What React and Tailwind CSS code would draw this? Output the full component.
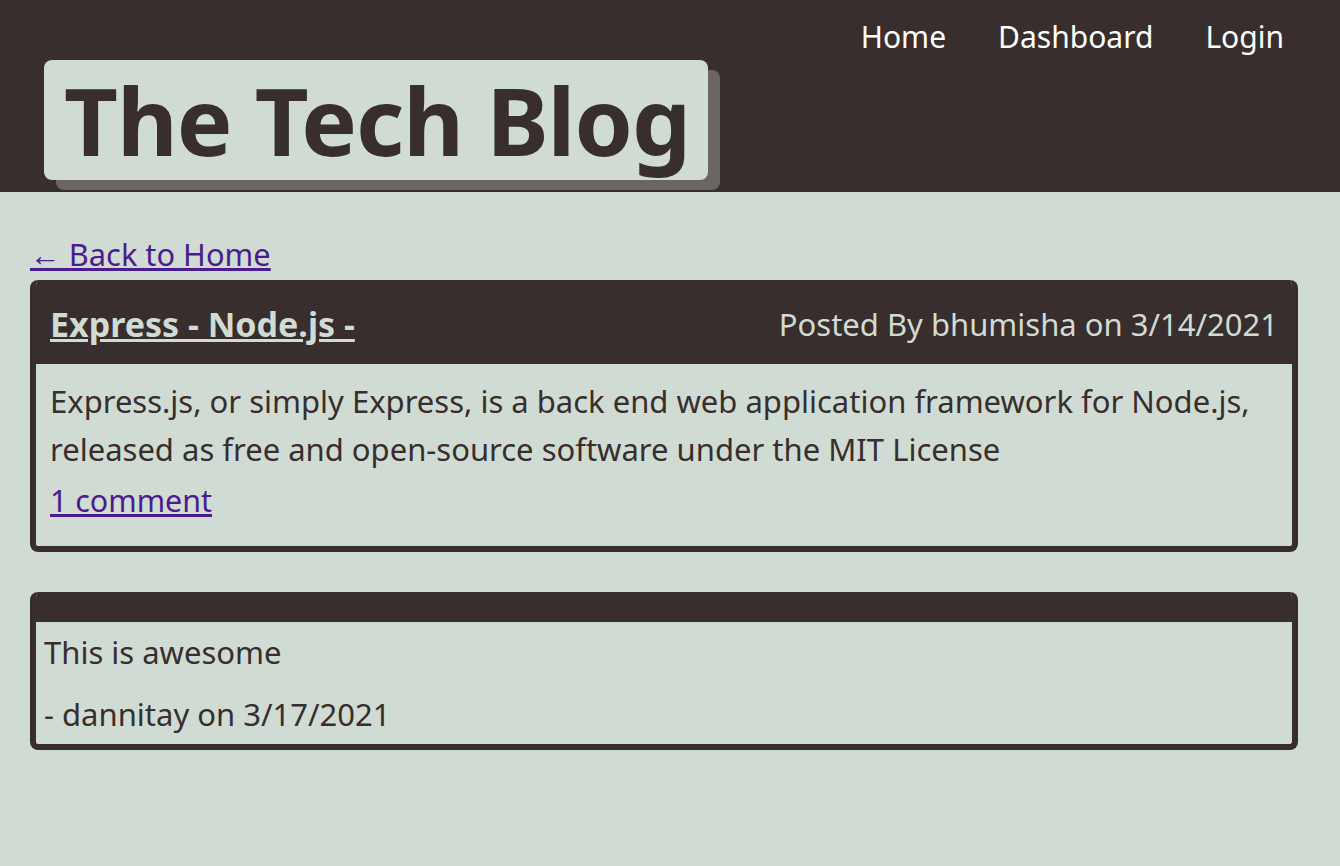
const posts = {
  title: 'Express - Node.js -',
  author: 'bhumisha',
  date: '3/14/2021',
  body: 'Express.js, or simply Express, is a back end web application framework for Node.js, released as free and open-source software under the MIT License',
};

const comments = [{ text: 'This is awesome', user: 'dannitay', date: '3/17/2021' }];

export default function App() {
  return (
    <div className="min-h-[866px] bg-[#d0dbd3] text-[#372e2d] font-['Noto_Sans',sans-serif]">
      {/* Header */}
      <header className="h-[192px] bg-[#372e2d] flex justify-between items-start pl-[44px] pr-[56px]">
        <div className="mt-[60px] relative">
          <div className="absolute left-[12px] top-[10px] w-full h-full rounded-[8px] bg-[#6b6563]" />
          <h1 className="relative h-[120px] pl-[20px] pr-[18px] rounded-[8px] bg-[#d0dbd3] text-[#372e2d] text-[93.5px] font-bold leading-[120px] tracking-[-1px]">
            The Tech Blog
          </h1>
        </div>
        <nav className="flex gap-[52px] pt-[16px] text-[30px] leading-[42px] text-white">
          <a href="#">Home</a>
          <a href="#">Dashboard</a>
          <a href="#">Login</a>
        </nav>
      </header>

      <main className="pl-[30px] pr-[42px] pt-[40px]">
        <a href="#" className="block w-fit text-[30.8px] leading-[44px] text-[#4b1b8f] underline">
          ← Back to Home
        </a>

        {/* Post */}
        <div className="mt-[4px] rounded-[8px] border-[6px] border-t-0 border-[#372e2d] overflow-hidden">
          <div className="h-[84px] bg-[#372e2d] flex items-center justify-between pl-[14px] pr-[14px] pt-[4px]">
            <a href="#" className="text-[34px] font-bold text-[#d0dbd3] underline">
              {posts.title}
            </a>
            <span className="text-[31px] text-[#d0dbd3]">
              Posted By {posts.author} on {posts.date}
            </span>
          </div>
          <div className="px-[14px] pt-[13px] pb-[23px]">
            <p className="text-[31px] leading-[48px]">{posts.body}</p>
            <a href="#" className="block w-fit mt-[6px] text-[30.4px] leading-[44px] text-[#4b1b8f] underline">
              1 comment
            </a>
          </div>
        </div>

        {/* Comments */}
        {comments.map((c) => (
          <div key={c.user} className="mt-[40px] rounded-[8px] border-[6px] border-t-0 border-[#372e2d] overflow-hidden">
            <div className="h-[30px] bg-[#372e2d]" />
            <div className="px-[8px] pt-[6px] pb-[6px] text-[31px] leading-[48px]">
              <p>{c.text}</p>
              <p className="mt-[14px]">
                - {c.user} on {c.date}
              </p>
            </div>
          </div>
        ))}
      </main>
    </div>
  );
}
